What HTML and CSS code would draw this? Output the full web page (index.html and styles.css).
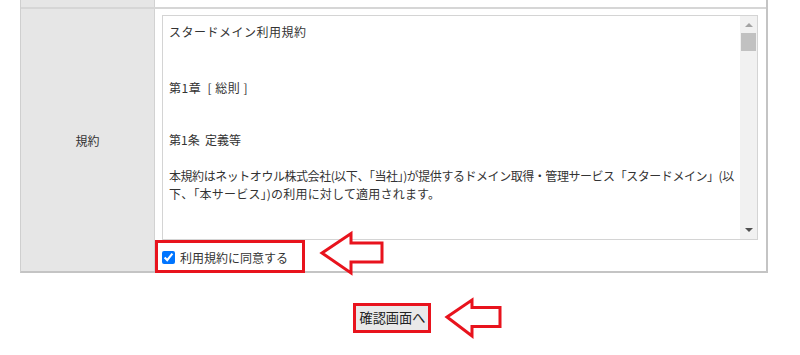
FILE: index.html
```html
<!DOCTYPE html>
<html lang="ja">
<head>
<meta charset="utf-8">
<title>規約</title>
<link rel="stylesheet" href="styles.css">
</head>
<body>
<div class="page">
  <div class="form-table">
    <div class="row row-top">
      <div class="th"></div>
      <div class="td"></div>
    </div>
    <div class="row row-terms">
      <div class="th">規約</div>
      <div class="td">
        <div class="terms-box">
          <div class="terms-text">
            <div class="line title">スタードメイン利用規約</div>
            <div class="line chapter">第1章 &nbsp;[ 総則 ]</div>
            <div class="line article">第1条&nbsp; 定義等</div>
            <div class="line para">本規約はネットオウル株式会社(以下、「当社」)が提供するドメイン取得・管理サービス「スタードメイン」(以</div>
            <div class="line para-cont">下、「本サービス」)の利用に対して適用されます。</div>
          </div>
          <div class="scrollbar">
            <span class="arrow-up"></span>
            <span class="thumb"></span>
            <span class="arrow-down"></span>
          </div>
        </div>
        <label class="agree"><input type="checkbox" checked><span>利用規約に同意する</span></label>
      </div>
    </div>
  </div>
  <div class="actions">
    <span class="btn-highlight"><button class="confirm-btn" type="button">確認画面へ</button></span>
  </div>

  <div class="highlight highlight-agree"></div>
  <svg class="callout callout-agree" width="66" height="46" viewBox="0 0 66 46">
    <polygon points="2,21 31,1.5 31,11 62,11 62,30 31,30 31,41 " fill="#fff" stroke="#e8131d" stroke-width="3" stroke-linejoin="miter"/>
  </svg>
  <svg class="callout callout-btn" width="60" height="42" viewBox="0 0 60 42">
    <polygon points="2,19 27,2 27,9.5 55,9.5 55,28.5 27,28.5 27,38 " fill="#fff" stroke="#e8131d" stroke-width="3" stroke-linejoin="miter"/>
  </svg>
</div>
</body>
</html>
```

FILE: styles.css
```css
html, body {
  margin: 0;
  padding: 0;
  background: #fff;
}

body {
  font-family: "Noto Sans CJK JP", "Noto Sans", sans-serif;
  color: #333;
  font-size: 12px;
}

.page {
  position: relative;
  width: 800px;
  height: 355px;
  overflow: hidden;
}

.form-table {
  margin-left: 20px;
  width: 745px;
  border-left: 1px solid #cfcfcf;
  border-right: 2px solid #c4c4c4;
  border-bottom: 2px solid #c4c4c4;
}

.row {
  display: grid;
  grid-template-columns: 134px 1fr;
}

.row-top {
  height: 7px;
  border-bottom: 2px solid #d6d6d6;
}

.th {
  background: #e6e6e6;
  border-right: 1px solid #d2d2d2;
  display: flex;
  align-items: center;
  justify-content: center;
  color: #333;
  font-size: 12px;
}

.row-terms {
  height: 262px;
}

.row-terms .td {
  padding: 6px 0 0 7px;
}

.terms-box {
  position: relative;
  width: 594px;
  height: 223px;
  border: 1px solid #d4d4d4;
  overflow: hidden;
}

.terms-text {
  padding: 7px 0 0 6px;
  line-height: 18px;
  font-size: 12px;
  color: #333;
  white-space: nowrap;
}

.title {
  letter-spacing: 0.5px;
}

.chapter {
  margin-top: 38px;
  letter-spacing: 0.5px;
}

.article {
  margin-top: 34px;
}

.para {
  margin-top: 18px;
  letter-spacing: -0.45px;
}

.para-cont {
  letter-spacing: 0.2px;
}

.scrollbar {
  position: absolute;
  top: 0;
  right: 0;
  width: 17px;
  height: 100%;
  background: #f1f1f1;
  display: flex;
  flex-direction: column;
  align-items: center;
}

.arrow-up {
  margin-top: 7px;
  width: 0;
  height: 0;
  border-left: 4px solid transparent;
  border-right: 4px solid transparent;
  border-bottom: 4px solid #a3a3a3;
}

.thumb {
  margin-top: 6px;
  width: 15px;
  height: 18px;
  background: #c1c1c1;
}

.arrow-down {
  margin-top: auto;
  margin-bottom: 7px;
  width: 0;
  height: 0;
  border-left: 4px solid transparent;
  border-right: 4px solid transparent;
  border-top: 4px solid #505050;
}

.agree {
  display: flex;
  align-items: center;
  gap: 5px;
  margin-top: 9px;
  font-size: 12px;
  color: #333;
}

.agree input {
  margin: 0;
  width: 13px;
  height: 13px;
  accent-color: #0075ff;
}

.actions {
  display: flex;
  justify-content: center;
  margin-top: 30px;
  padding-right: 17px;
}

.btn-highlight {
  display: inline-flex;
  border: 3px solid #e8131d;
}

.confirm-btn {
  font-family: "Noto Sans CJK JP", sans-serif;
  font-size: 13.2px;
  color: #222;
  background: #e9e9e9;
  border: 0;
  margin: 0;
  padding: 0 0 0 4px;
  width: 72px;
  height: 24px;
  line-height: 24px;
  text-align: left;
  white-space: nowrap;
  overflow: visible;
}

.highlight {
  position: absolute;
  border: 3px solid #e8131d;
  box-sizing: border-box;
}

.highlight-agree {
  left: 155px;
  top: 240px;
  width: 150px;
  height: 33px;
}

.callout {
  position: absolute;
  overflow: visible;
}

.callout-agree {
  left: 320px;
  top: 232px;
}

.callout-btn {
  left: 445px;
  top: 298px;
}
```
